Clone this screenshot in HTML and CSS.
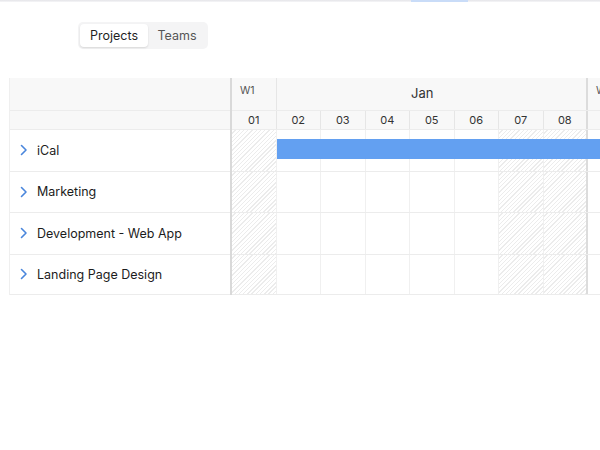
FILE: index.html
```html
<!DOCTYPE html>
<html>
<head>
<meta charset="utf-8">
<link rel="stylesheet" href="styles.css">
</head>
<body>
<div class="topbar"><div class="topbar-active"></div></div>
<div class="seg">
  <div class="seg-btn active">Projects</div>
  <div class="seg-btn">Teams</div>
</div>
<div class="gantt">
  <div class="left">
    <div class="lh1"></div>
    <div class="lh2"></div>
    <div class="lrow"><svg class="chev" width="8" height="12" viewBox="0 0 8 12"><path d="M1.5 1.5 L6 6 L1.5 10.5" fill="none" stroke="#4a86dc" stroke-width="1.6" stroke-linecap="round" stroke-linejoin="round"/></svg><span>iCal</span></div>
    <div class="lrow"><svg class="chev" width="8" height="12" viewBox="0 0 8 12"><path d="M1.5 1.5 L6 6 L1.5 10.5" fill="none" stroke="#4a86dc" stroke-width="1.6" stroke-linecap="round" stroke-linejoin="round"/></svg><span>Marketing</span></div>
    <div class="lrow"><svg class="chev" width="8" height="12" viewBox="0 0 8 12"><path d="M1.5 1.5 L6 6 L1.5 10.5" fill="none" stroke="#4a86dc" stroke-width="1.6" stroke-linecap="round" stroke-linejoin="round"/></svg><span>Development - Web App</span></div>
    <div class="lrow"><svg class="chev" width="8" height="12" viewBox="0 0 8 12"><path d="M1.5 1.5 L6 6 L1.5 10.5" fill="none" stroke="#4a86dc" stroke-width="1.6" stroke-linecap="round" stroke-linejoin="round"/></svg><span>Landing Page Design</span></div>
  </div>
  <div class="right">
    <div class="th1">
      <div class="wk">W1</div>
      <div class="month">Jan</div>
      <div class="wk">W</div>
    </div>
    <div class="th2">
      <div class="day">01</div><div class="day">02</div><div class="day">03</div><div class="day">04</div><div class="day">05</div><div class="day">06</div><div class="day">07</div><div class="day end">08</div><div class="day"></div>
    </div>
    <div class="brow">
      <div class="cell hatch"></div><div class="cell"></div><div class="cell"></div><div class="cell"></div><div class="cell"></div><div class="cell"></div><div class="cell hatch"></div><div class="cell hatch end"></div><div class="cell"></div>
      <div class="bar"></div>
    </div>
    <div class="brow">
      <div class="cell hatch"></div><div class="cell"></div><div class="cell"></div><div class="cell"></div><div class="cell"></div><div class="cell"></div><div class="cell hatch"></div><div class="cell hatch end"></div><div class="cell"></div>
    </div>
    <div class="brow">
      <div class="cell hatch"></div><div class="cell"></div><div class="cell"></div><div class="cell"></div><div class="cell"></div><div class="cell"></div><div class="cell hatch"></div><div class="cell hatch end"></div><div class="cell"></div>
    </div>
    <div class="brow">
      <div class="cell hatch"></div><div class="cell"></div><div class="cell"></div><div class="cell"></div><div class="cell"></div><div class="cell"></div><div class="cell hatch"></div><div class="cell hatch end"></div><div class="cell"></div>
    </div>
  </div>
</div>
</body>
</html>
```
FILE: styles.css
```css
* { box-sizing: border-box; }
html, body { margin: 0; padding: 0; background: #fff; }
body {
  font-family: Inter, "Noto Sans", sans-serif;
  color: #222;
  width: 600px;
  height: 450px;
  overflow: hidden;
}
.topbar {
  height: 2px;
  background: linear-gradient(#e4e4e8, #f6f6f8);
  display: flex;
}
.topbar-active {
  margin-left: 411px;
  width: 57px;
  height: 2px;
  background: #c9dcf8;
}
.seg {
  display: flex;
  width: 130px;
  height: 27px;
  margin: 20px 0 0 78px;
  padding: 2px;
  background: #f4f4f5;
  border-radius: 5px;
}
.seg-btn {
  display: flex;
  align-items: center;
  justify-content: center;
  font-size: 12.5px;
  color: #555;
  height: 23px;
  width: 58px;
}
.seg-btn.active {
  width: 68px;
  background: #fff;
  color: #1f1f1f;
  border-radius: 4px;
  box-shadow: 0 1px 2px rgba(0,0,0,0.12);
}
.gantt {
  display: flex;
  margin: 29px 0 0 9px;
  width: 591px;
  overflow: hidden;
}
.left {
  flex: none;
  width: 223px;
  border-left: 1px solid #efefef;
  border-right: 2px solid #d9d9d9;
}
.lh1 {
  height: 33px;
  background: #f8f8f8;
  border-bottom: 1px solid #ececec;
}
.lh2 {
  height: 18px;
  background: #f8f8f8;
}
.lrow {
  height: 41.5px;
  border-top: 1px solid #ececec;
  display: flex;
  align-items: center;
  padding-left: 10px;
  font-size: 12.5px;
  color: #1c1c1c;
}
.lrow:last-child { border-bottom: 1px solid #ececec; }
.chev { margin-right: 9px; flex: none; }
.right {
  flex: none;
  width: 420px;
}
.th1 {
  display: flex;
  height: 33px;
  background: #f8f8f8;
  border-bottom: 1px solid #ececec;
}
.wk {
  flex: none;
  width: 44.5px;
  border-right: 1px solid #e6e6e6;
  font-size: 10.5px;
  color: #555;
  padding: 6px 0 0 8px;
}
.month {
  flex: none;
  width: 311.5px;
  border-right: 2px solid #dcdcdc;
  display: flex;
  align-items: center;
  justify-content: center;
  font-size: 13px;
  color: #333;
  padding: 0 18px 2px 0;
}
.th2 {
  display: flex;
  height: 18px;
  background: #f8f8f8;
}
.day {
  flex: none;
  width: 44.5px;
  border-right: 1px solid #e6e6e6;
  display: flex;
  align-items: center;
  justify-content: center;
  font-size: 11px;
  color: #333;
}
.day.end, .cell.end { border-right: 2px solid #dcdcdc; }
.brow {
  position: relative;
  display: flex;
  height: 41.5px;
  border-top: 1px solid #ececec;
}
.brow:last-child { border-bottom: 1px solid #ececec; }
.cell {
  flex: none;
  width: 44.5px;
  border-right: 1px solid #f0f0f0;
}
.hatch {
  background: repeating-linear-gradient(135deg, #fff 0, #fff 2px, #ececec 2px, #ececec 3px);
}
.bar {
  position: absolute;
  left: 45px;
  top: 9px;
  width: 400px;
  height: 20px;
  background: #63a0f1;
}
```
